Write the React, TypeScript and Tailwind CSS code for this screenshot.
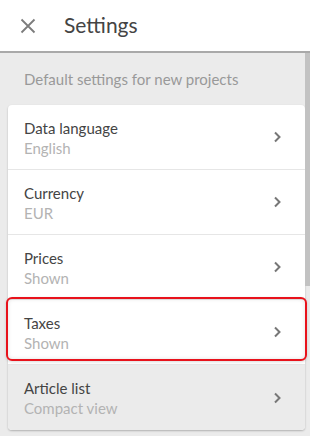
import React from "react";

const rows = [
  { title: "Data language", value: "English" },
  { title: "Currency", value: "EUR" },
  { title: "Prices", value: "Shown" },
  { title: "Taxes", value: "Shown", highlight: true },
  { title: "Article list", value: "Compact view", dim: true },
];

function Chevron() {
  return (
    <svg width="10" height="12" viewBox="0 0 10 12" className="shrink-0">
      <path d="M3 1.5 L7.5 6 L3 10.5" fill="none" stroke="#777" strokeWidth="2" />
    </svg>
  );
}

export default function App() {
  return (
    <div className="w-[310px] h-[436px] overflow-hidden bg-[#ebebeb] flex flex-col" style={{ fontFamily: "Lato, 'Open Sans', sans-serif" }}>
      <div className="h-[53px] shrink-0 bg-white border-b-2 border-[#a9a9a9] flex items-center">
        <svg width="16" height="16" viewBox="0 0 16 16" className="ml-[20px]">
          <path d="M1.5 1.5 L14.5 14.5 M14.5 1.5 L1.5 14.5" stroke="#7c7c7c" strokeWidth="1.8" fill="none" />
        </svg>
        <span className="ml-[28px] text-[21px] text-[#444] leading-none pb-[2px]">Settings</span>
      </div>
      <div className="relative flex-1 flex flex-col">
        <div className="absolute right-0 top-0 w-[5px] h-[233px] bg-[#c2c2c2]" />
        <div className="h-[52px] flex items-center pl-[24px] pt-[1px] text-[15px] text-[#999]">
          Default settings for new projects
        </div>
        <div className="ml-[8px] w-[297px] bg-white rounded-[4px] shadow-[0_1px_2px_rgba(0,0,0,0.25)] flex flex-col">
          {rows.map((r, i) => (
            <div
              key={r.title}
              className={
                "relative flex items-center pl-[16px] pr-[23px] " +
                (i === 4 ? "h-[65px] bg-[#ebebeb] rounded-b-[4px] " : "h-[65px] border-b border-[#e6e6e6] ") +
                (i === 0 ? "rounded-t-[4px]" : "")
              }
            >
              {r.highlight && (
                <span className="absolute -left-[2px] -right-[2px] -top-[3px] bottom-[3px] rounded-[6px] border-2 border-[#e8121b] shadow-[inset_0_0_4px_rgba(0,0,0,0.12),0_1px_3px_rgba(0,0,0,0.15)] pointer-events-none" />
              )}
              <div className="flex-1 flex flex-col pt-[1px]">
                <span className="text-[15px] leading-[20px] text-[#444]">{r.title}</span>
                <span className="text-[15px] leading-[20px] text-[#b3b3b3]">{r.value}</span>
              </div>
              <Chevron />
            </div>
          ))}
        </div>
      </div>
    </div>
  );
}
